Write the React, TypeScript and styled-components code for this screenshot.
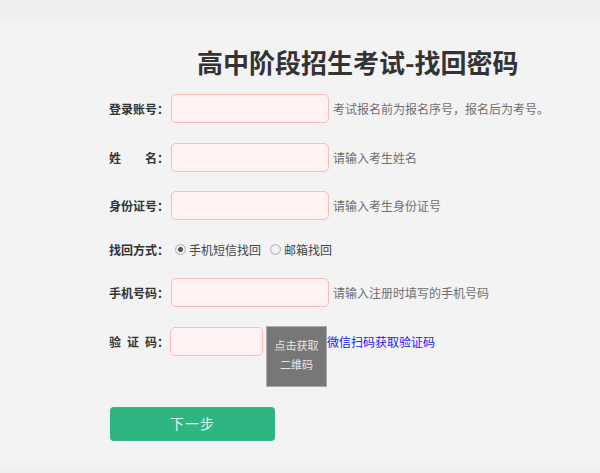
import React from 'react';
import styled, { createGlobalStyle } from 'styled-components';

const GlobalStyle = createGlobalStyle`
  html, body {
    margin: 0;
    padding: 0;
    background: #efefef;
    font-family: "Liberation Sans", "Noto Sans CJK SC", sans-serif;
  }
`;

const Page = styled.div`
  width: 600px;
  height: 473px;
  display: flex;
  flex-direction: column;
  background: #efefef;
  overflow: hidden;
`;

const TopBand = styled.div`
  height: 20px;
  flex-shrink: 0;
`;

const Main = styled.div`
  height: 447px;
  background: #f3f3f3;
  padding-top: 27px;
  box-sizing: border-box;
`;

const Title = styled.h1`
  margin: 0 0 17px 197px;
  font-family: "Noto Sans CJK SC", sans-serif;
  font-size: 26px;
  line-height: 30px;
  font-weight: 700;
  color: #333;
`;

const Form = styled.div`
  display: flex;
  flex-direction: column;
  gap: 19.5px;
  padding-left: 109px;
`;

const Row = styled.div<{ $top?: boolean }>`
  display: flex;
  align-items: ${p => (p.$top ? 'flex-start' : 'center')};
`;

const Label = styled.span`
  width: 62px;
  flex-shrink: 0;
  font-family: "Noto Sans CJK SC", sans-serif;
  font-size: 12px;
  font-weight: 700;
  color: #333;
  white-space: pre;
  line-height: 29px;
`;

const Input = styled.input<{ $w?: number }>`
  width: ${p => p.$w ?? 158}px;
  height: 29px;
  box-sizing: border-box;
  margin: 0;
  padding: 0 6px;
  border: 1px solid #ffb9b9;
  border-radius: 5px;
  background: #fff2f2;
  outline: none;
  font-size: 12px;
`;

const Hint = styled.span`
  margin-left: 4px;
  font-family: "Noto Sans CJK SC", sans-serif;
  font-size: 12px;
  color: #6f6f6f;
`;

const RadioGroup = styled.div`
  display: flex;
  align-items: center;
  height: 19px;
  margin-left: 4px;
`;

const RadioOption = styled.label`
  display: flex;
  align-items: center;
  gap: 3px;
  margin-right: 9px;
  font-family: "Noto Sans CJK SC", sans-serif;
  font-size: 12px;
  color: #444;
`;

const RadioDot = styled.span<{ $on?: boolean }>`
  width: 11px;
  height: 11px;
  box-sizing: border-box;
  border-radius: 50%;
  border: 1px solid #b4b4b4;
  background: radial-gradient(circle, ${p => (p.$on ? '#555 0 2.2px' : 'transparent 0 0')}, #f3f3f3 2.6px, #dcdcdc 100%);
`;

const QrBox = styled.div`
  width: 61px;
  height: 61px;
  margin-left: 3px;
  margin-top: -1px;
  box-sizing: border-box;
  border: 1px solid #aaa;
  background: #777;
  display: flex;
  flex-direction: column;
  align-items: center;
  justify-content: center;
  font-family: "Noto Sans CJK SC", sans-serif;
  font-size: 11px;
  line-height: 19px;
  color: #e6e6e6;
  padding-bottom: 3px;
`;

const WxLink = styled.a`
  margin-top: 6px;
  font-family: "Noto Sans CJK SC", sans-serif;
  font-size: 12px;
  color: #1a1aff;
  text-decoration: none;
  line-height: 17px;
`;

const NextButton = styled.button`
  width: 165px;
  height: 34px;
  margin: 0.5px 0 0 1px;
  padding: 0 0 2px;
  border: none;
  border-radius: 4px;
  background: #2eb582;
  color: #e3f6ec;
  font-family: "Noto Sans CJK SC", sans-serif;
  font-size: 14px;
  letter-spacing: 1px;
  cursor: pointer;
`;

const fields = [
  { label: '登录账号：', hint: '考试报名前为报名序号，报名后为考号。' },
  { label: '姓\u3000\u3000名：', hint: '请输入考生姓名' },
  { label: '身份证号：', hint: '请输入考生身份证号' },
];

export default function App() {
  const [mode, setMode] = React.useState<'sms' | 'mail'>('sms');

  return (
    <Page>
      <GlobalStyle />
      <TopBand />
      <Main>
        <Title>高中阶段招生考试-找回密码</Title>
        <Form>
          {fields.map(f => (
            <Row key={f.label}>
              <Label>{f.label}</Label>
              <Input />
              <Hint>{f.hint}</Hint>
            </Row>
          ))}
          <Row>
            <Label style={{ lineHeight: '19px' }}>找回方式：</Label>
            <RadioGroup>
              <RadioOption onClick={() => setMode('sms')}>
                <RadioDot $on={mode === 'sms'} />
                手机短信找回
              </RadioOption>
              <RadioOption onClick={() => setMode('mail')}>
                <RadioDot $on={mode === 'mail'} />
                邮箱找回
              </RadioOption>
            </RadioGroup>
          </Row>
          <Row>
            <Label>手机号码：</Label>
            <Input />
            <Hint>请输入注册时填写的手机号码</Hint>
          </Row>
          <Row $top>
            <Label>{'验\u2002证\u2002码：'}</Label>
            <Input $w={93} style={{ marginLeft: -1 }} />
            <QrBox>
              <span>点击获取</span>
              <span>二维码</span>
            </QrBox>
            <WxLink href="#">微信扫码获取验证码</WxLink>
          </Row>
          <NextButton>下一步</NextButton>
        </Form>
      </Main>
    </Page>
  );
}
